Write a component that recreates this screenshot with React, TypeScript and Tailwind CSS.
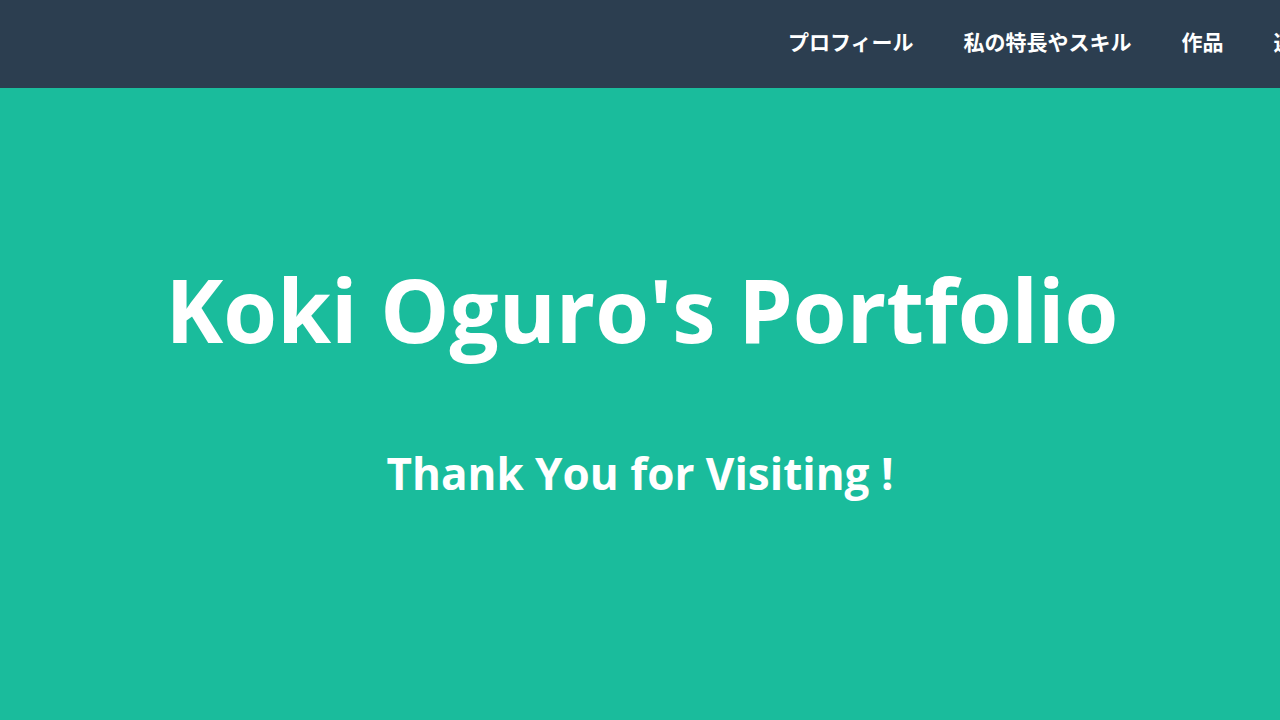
const navItems = ['プロフィール', '私の特長やスキル', '作品', '連絡先'];

export default function App() {
  return (
    <div className="h-[720px] w-[1280px] overflow-hidden bg-[#1abc9c] font-['Open_Sans',sans-serif]">
      <header className="flex h-[88px] items-center overflow-hidden bg-[#2c3e50] pb-[5px]">
        <nav className="flex shrink-0 items-center gap-[50px] pl-[788px] font-['Noto_Sans_CJK_JP',sans-serif] text-[21px] font-bold text-white">
          {navItems.map((item) => (
            <a key={item} href="#" className="shrink-0 whitespace-nowrap">
              {item}
            </a>
          ))}
        </nav>
      </header>
      <main className="flex flex-col items-center pt-[178px] text-white">
        <h1 className="ml-[4px] text-[87px] font-bold leading-[87px]">Koki Oguro's Portfolio</h1>
        <p className="mt-[96px] text-[44px] font-bold leading-[48px]">Thank You for Visiting !</p>
      </main>
    </div>
  );
}
